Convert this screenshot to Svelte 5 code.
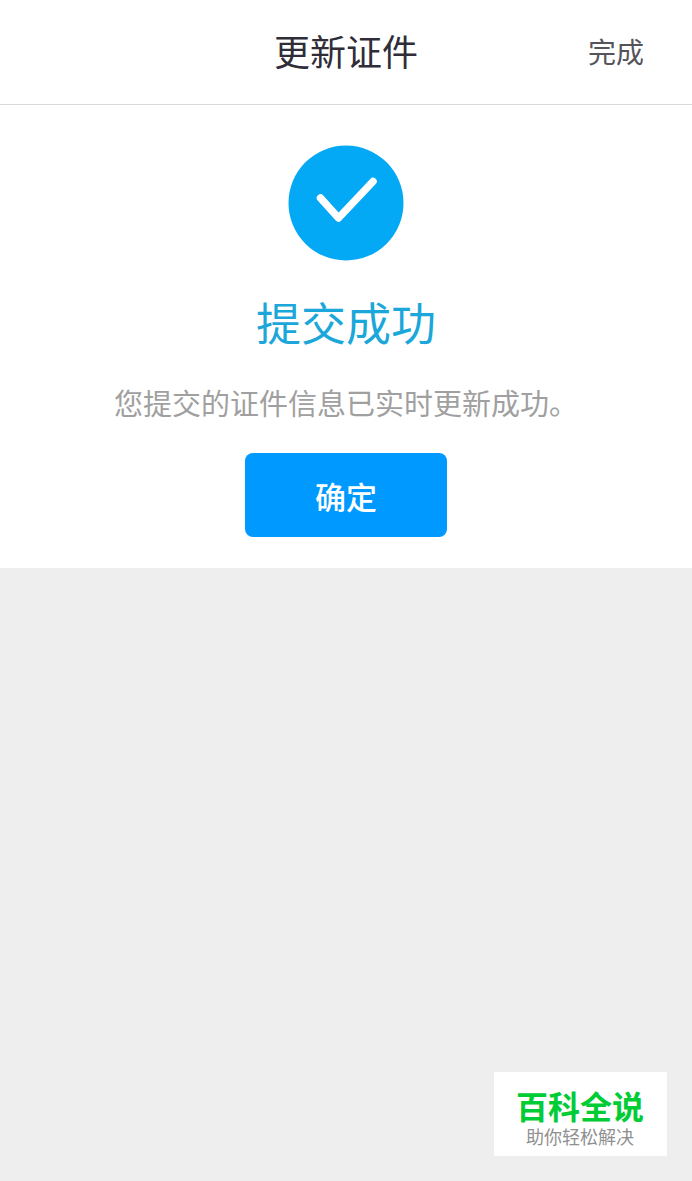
<script lang="ts">
  let done = $state(false);

  function finish() {
    done = true;
  }
</script>

<div class="page" data-done={done}>
  <header class="navbar">
    <h1 class="title">更新证件</h1>
    <button type="button" class="done" onclick={finish}>完成</button>
  </header>

  <main class="result">
    <svg class="badge" viewBox="0 0 116 116" aria-hidden="true">
      <circle cx="58" cy="58" r="57.5" fill="#03a9f4" />
      <path d="M32.5 53 L50.5 73 L85 36.5" fill="none" stroke="#fff" stroke-width="7.5" stroke-linecap="round" stroke-linejoin="round" />
    </svg>
    <h2 class="heading">提交成功</h2>
    <p class="message">您提交的证件信息已实时更新成功。</p>
    <button type="button" class="confirm" onclick={finish}>确定</button>
  </main>

  <aside class="brand">
    <strong class="brand-name">百科全说</strong>
    <span class="brand-slogan">助你轻松解决</span>
  </aside>
</div>

<style>
  :global(body) {
    background: #eee;
  }

  .page {
    position: relative;
    min-height: 100vh;
    font-family: "Liberation Sans", "Noto Sans CJK SC", sans-serif;
  }

  button {
    padding: 0;
    border: 0;
    font-family: inherit;
    cursor: pointer;
  }

  h1,
  h2,
  p {
    margin: 0;
    font-weight: 400;
  }

  .navbar {
    display: grid;
    grid-template-columns: 1fr auto 1fr;
    align-items: center;
    padding: 28px 48px 24px;
    background: #fff;
    border-bottom: 1px solid #d9d9d9;
  }

  .title {
    grid-column: 2;
    color: #2f2d38;
    font-size: 36px;
    line-height: 52px;
  }

  .done {
    justify-self: end;
    background: none;
    color: #55545a;
    font-size: 28px;
    line-height: 40px;
  }

  .result {
    display: flex;
    flex-direction: column;
    align-items: center;
    padding: 40px 24px 31px;
    background: #fff;
  }

  .badge {
    width: 116px;
    height: 116px;
  }

  .heading {
    margin-top: 32px;
    color: #1ba7d9;
    font-size: 45px;
    line-height: 66px;
  }

  .message {
    margin-top: 26px;
    color: #a0a0a0;
    font-size: 29px;
    line-height: 40px;
  }

  .confirm {
    width: 202px;
    height: 84px;
    margin-top: 28px;
    border-radius: 8px;
    background: #09f;
    color: #fff;
    font-size: 31px;
    font-weight: 500;
  }

  .brand {
    position: absolute;
    right: 25px;
    bottom: 25px;
    display: flex;
    flex-direction: column;
    align-items: center;
    padding: 17px 23px 7px 22px;
    background: #fff;
  }

  .brand-name {
    color: #00cc36;
    font-size: 32px;
    line-height: 38px;
  }

  .brand-slogan {
    color: #909090;
    font-size: 18px;
    line-height: 22px;
  }
</style>
